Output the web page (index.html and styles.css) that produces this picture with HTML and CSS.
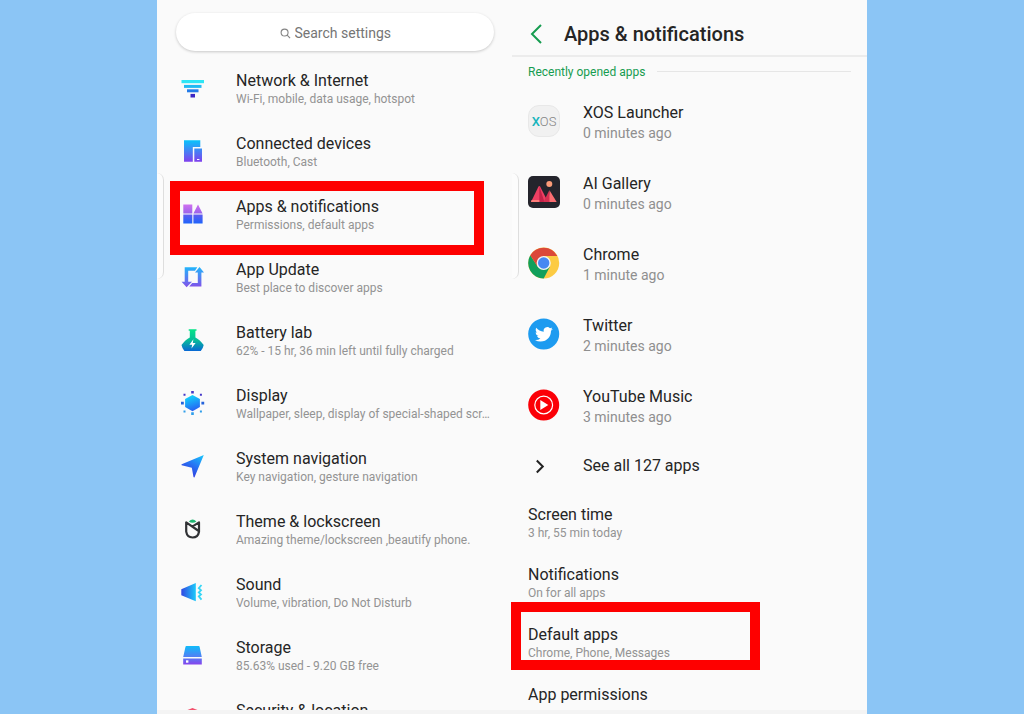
FILE: index.html
```html
<!DOCTYPE html>
<html lang="en">
<head>
<meta charset="utf-8">
<title>Settings</title>
<link rel="stylesheet" href="styles.css">
</head>
<body>
<main class="screens">
  <section class="screen" aria-label="Settings">
    <div class="edge-handle"></div>
    <div class="screen-content">
      <label class="search">
        <svg class="search-icon" viewBox="0 0 12 12" aria-hidden="true"><circle cx="5" cy="5" r="3.8"/><path d="M7.8 7.8 11 11"/></svg>
        <input class="search-input" type="text" placeholder="Search settings" aria-label="Search settings">
      </label>
      <nav class="settings-list">
        <a class="setting" href="#network">
          <svg class="setting-icon" viewBox="0 0 28 28" aria-hidden="true"><path fill="#2ee6f5" d="M2.5 5H25v3.200H2.500z"/><path fill="#20b9f3" d="M5 9.900h17.500v3H5z"/><path fill="#237be8" d="M8 14.300h11.500v3H8z"/><path fill="#3c27c4" d="M11.500 18.900H16v3.600h-4.500z"/></svg>
          <span class="setting-text"><span class="title">Network &amp; Internet</span><span class="summary">Wi-Fi, mobile, data usage, hotspot</span></span>
        </a>
        <a class="setting" href="#devices">
          <svg class="setting-icon" viewBox="0 0 28 28" aria-hidden="true"><defs><linearGradient id="g-dev" x2="0" y2="1"><stop stop-color="#08c4fb"/><stop offset="1" stop-color="#8040ee"/></linearGradient></defs><path fill="url(#g-dev)" d="M5 2.200h16.300v6.800h-7.500v14.700H5zM15.300 10.600h7.700v13.100h-7.700z"/><path fill="#fff" d="M18 21h2.400v1H18z"/></svg>
          <span class="setting-text"><span class="title">Connected devices</span><span class="summary">Bluetooth, Cast</span></span>
        </a>
        <a class="setting setting-marked" href="#apps">
          <svg class="setting-icon" viewBox="0 0 28 28" aria-hidden="true"><defs><linearGradient id="g-apps" x2="0" y2="1"><stop stop-color="#cf70f0"/><stop offset=".45" stop-color="#9c64ea"/><stop offset=".55" stop-color="#5b5cf0"/><stop offset="1" stop-color="#1c64fb"/></linearGradient></defs><path fill="url(#g-apps)" d="M4.300 3.600h9v8.800h-9zM19 3.600l4.600 8.800h-9.200zM4.300 13.600h9v9h-9zM14.400 13.600h9.200v9h-9.200z"/></svg>
          <span class="setting-text"><span class="title">Apps &amp; notifications</span><span class="summary">Permissions, default apps</span></span>
        </a>
        <a class="setting" href="#update">
          <svg class="setting-icon" viewBox="0 0 28 28" aria-hidden="true"><defs><linearGradient id="g-upd" x2="0" y2="1"><stop stop-color="#20b6fb"/><stop offset="1" stop-color="#8350ea"/></linearGradient></defs><path fill="url(#g-upd)" d="M5.700 3.300h12.600L16 6.700H9.200v11H13L7.600 23.200 2.600 17.700h3.100zM20.500 3 25 8.500h-2.600V22.600H10.200l3-3.500h5.600V8.500H16z"/></svg>
          <span class="setting-text"><span class="title">App Update</span><span class="summary">Best place to discover apps</span></span>
        </a>
        <a class="setting" href="#battery">
          <svg class="setting-icon" viewBox="0 0 28 28" aria-hidden="true"><defs><linearGradient id="g-bat" x2="0" y2="1"><stop stop-color="#06e587"/><stop offset=".5" stop-color="#06bd98"/><stop offset="1" stop-color="#0868d4"/></linearGradient></defs><path fill="url(#g-bat)" d="M9.700 2.200h7.800v1.600h-1.100v6.700q4 1.800 8.300 7.500-.7 3.600-2.900 5.900H5.400q-2.200-2.300-2.900-5.900 4.300-5.700 8.300-7.500V3.800H9.700z"/><path fill="#fff" d="m14.400 12.300-4 5.400h2.700l-.6 3.800 4.100-5.600h-2.800z"/></svg>
          <span class="setting-text"><span class="title">Battery lab</span><span class="summary">62% - 15 hr, 36 min left until fully charged</span></span>
        </a>
        <a class="setting" href="#display">
          <svg class="setting-icon" viewBox="0 0 28 28" aria-hidden="true"><defs><linearGradient id="g-dis" x1=".3" x2=".6" y2="1"><stop stop-color="#11d8fb"/><stop offset="1" stop-color="#275cf3"/></linearGradient></defs><path fill="url(#g-dis)" d="m13.500 5 7.400 4.100v8l-7.400 4.200-7.400-4.200v-8z"/><path fill="#4336c8" d="M12.200 1h2.600v2.600h-2.600zM4.500 3.700h2v2h-2zM20.900 3.700h2v2h-2z"/><path fill="#2463dc" d="M2 11.800h2.800v2.800H2zM22.400 11.800h2.800v2.800h-2.800z"/><path fill="#2f9eea" d="M12.200 22.300h2.600V25h-2.600zM4.500 20.600h2v2h-2zM20.900 20.600h2v2h-2z"/></svg>
          <span class="setting-text"><span class="title">Display</span><span class="summary">Wallpaper, sleep, display of special-shaped scr…</span></span>
        </a>
        <a class="setting" href="#navigation">
          <svg class="setting-icon" viewBox="0 0 28 28" aria-hidden="true"><defs><linearGradient id="g-nav" x1="1" x2=".4" y2="1"><stop stop-color="#16c9fc"/><stop offset=".5" stop-color="#2678f4"/><stop offset="1" stop-color="#3336de"/></linearGradient></defs><path fill="url(#g-nav)" d="M24.800 2 15.500 24.200q-.5.600-1-.2L12.800 14.700 2.700 12.200q-.6-.5 0-1z"/></svg>
          <span class="setting-text"><span class="title">System navigation</span><span class="summary">Key navigation, gesture navigation</span></span>
        </a>
        <a class="setting" href="#theme">
          <svg class="setting-icon" viewBox="0 0 28 28" aria-hidden="true"><path fill="#20b673" d="M9.800 5.500q3.800-4 7.600 0-1.800 1.300-3.800 1.300T9.800 5.500z"/><path fill="none" stroke="#303235" stroke-width="2.200" stroke-linejoin="round" d="M7.200 6.400v9.300q.9 5.800 6.400 5.800 5.400 0 6.400-5.800V6.400L13.300 10.600zM7.200 6.400l12.500 8.600"/></svg>
          <span class="setting-text"><span class="title">Theme &amp; lockscreen</span><span class="summary">Amazing theme/lockscreen ,beautify phone.</span></span>
        </a>
        <a class="setting" href="#sound">
          <svg class="setting-icon" viewBox="0 0 28 28" aria-hidden="true"><defs><linearGradient id="g-snd"><stop stop-color="#3147e2"/><stop offset="1" stop-color="#1ecafa"/></linearGradient></defs><path fill="url(#g-snd)" d="M2.300 10.200 16.800 4v18.200L2.300 16.300z"/><path fill="none" stroke="#36d6f5" stroke-width="1.800" d="m22.500 6-2.700 3.200 2.200 2-2.200 2.200 2.200 2-2.200 2 2.700 3.200"/></svg>
          <span class="setting-text"><span class="title">Sound</span><span class="summary">Volume, vibration, Do Not Disturb</span></span>
        </a>
        <a class="setting" href="#storage">
          <svg class="setting-icon" viewBox="0 0 28 28" aria-hidden="true"><defs><linearGradient id="g-sto" x2="0" y2="1"><stop stop-color="#10bcfa"/><stop offset=".65" stop-color="#5a77f3"/><stop offset="1" stop-color="#8742ec"/></linearGradient></defs><path fill="url(#g-sto)" d="M7.300 4h12.500q.6 0 .8.700L22.800 15H4.200L6.500 4.700q.2-.7.800-.7zM4.200 16.600h18.600v6H4.200z"/><path fill="#fff" d="M7 18.300h2.400v2.400H7z"/></svg>
          <span class="setting-text"><span class="title">Storage</span><span class="summary">85.63% used - 9.20 GB free</span></span>
        </a>
        <a class="setting" href="#security">
          <svg class="setting-icon" viewBox="0 0 28 28" aria-hidden="true"><path fill="#f2506c" d="M13.500 3q4 2 9 3v8q-2 7-9 10-7-3-9-10V6q5-1 9-3z"/></svg>
          <span class="setting-text"><span class="title">Security &amp; location</span></span>
        </a>
      </nav>
    </div>
  </section>

  <section class="screen" aria-label="Apps and notifications">
    <div class="edge-handle"></div>
    <div class="screen-content">
      <header class="app-bar">
        <button class="back" type="button" aria-label="Back"><svg class="back-icon" viewBox="0 0 14 20" aria-hidden="true"><path d="M12 1 3 10l9 9"/></svg></button>
        <h1 class="heading">Apps &amp; notifications</h1>
      </header>
      <h2 class="section-label">Recently opened apps</h2>
      <nav class="app-list">
        <a class="app" href="#xos">
          <span class="xos-icon" aria-hidden="true"><span class="xos-x">X</span>OS</span>
          <span class="app-text"><span class="title">XOS Launcher</span><span class="time">0 minutes ago</span></span>
        </a>
        <a class="app" href="#gallery">
          <svg class="app-icon" viewBox="0 0 32 32" aria-hidden="true"><rect width="32" height="32" rx="5" fill="#24242c"/><circle cx="21.300" cy="8" r="3" fill="#fb9b78"/><path fill="#ee3f63" d="M10.500 10.500q.8-1 1.600 0L20 26H3z"/><path fill="#c42249" d="m11.300 10.200 5.200 15.800h-5.200z"/><path fill="#fa6d71" d="m21.500 14.300 7.200 11.700h-8.200z"/><path fill="#d62f51" d="m21.300 14.300.2 11.700h-6z"/><path fill="#ff7b79" d="M3.500 24h7.800v2H3z"/></svg>
          <span class="app-text"><span class="title">AI Gallery</span><span class="time">0 minutes ago</span></span>
        </a>
        <a class="app" href="#chrome">
          <svg class="app-icon" viewBox="0 0 32 32" aria-hidden="true"><circle cx="15.700" cy="16" r="15.500" fill="#fccb43"/><path fill="#119f5b" d="M2.280 8.250A15.500 15.500 0 0 0 15.700 31.500L22 19.500 9.600 19.500z"/><path fill="#db4839" d="M2.280 8.250A15.500 15.500 0 0 1 29.300 8.900H15.700L9.500 19.500z"/><circle cx="15.700" cy="16" r="7.100" fill="#f4f4f4"/><circle cx="15.700" cy="16" r="5.700" fill="#4688f2"/></svg>
          <span class="app-text"><span class="title">Chrome</span><span class="time">1 minute ago</span></span>
        </a>
        <a class="app" href="#twitter">
          <svg class="app-icon" viewBox="0 0 32 32" aria-hidden="true"><circle cx="15.700" cy="16" r="15.500" fill="#1d9bf0"/><path fill="#fff" transform="translate(7 7.500) scale(.74)" d="M23.953 4.570a10 10 0 0 1-2.825.775 4.958 4.958 0 0 0 2.163-2.723c-.951.555-2.005.959-3.127 1.184a4.920 4.920 0 0 0-8.384 4.482C7.690 8.095 4.067 6.130 1.640 3.162a4.822 4.822 0 0 0-.666 2.475c0 1.710.870 3.213 2.188 4.096a4.904 4.904 0 0 1-2.228-.616v.060a4.923 4.923 0 0 0 3.946 4.827 4.996 4.996 0 0 1-2.212.085 4.936 4.936 0 0 0 4.604 3.417 9.867 9.867 0 0 1-6.102 2.105c-.390 0-.779-.023-1.170-.067a13.995 13.995 0 0 0 7.557 2.209c9.053 0 13.998-7.496 13.998-13.985 0-.210 0-.420-.015-.630A9.935 9.935 0 0 0 24 4.590z"/></svg>
          <span class="app-text"><span class="title">Twitter</span><span class="time">2 minutes ago</span></span>
        </a>
        <a class="app" href="#youtube-music">
          <svg class="app-icon" viewBox="0 0 32 32" aria-hidden="true"><circle cx="15.700" cy="16" r="15.500" fill="#fb0007"/><circle cx="15.700" cy="16" r="8.900" fill="none" stroke="#fff" stroke-width="1.200"/><path fill="#fff" d="m12.300 11 8 5-8 5z"/></svg>
          <span class="app-text"><span class="title">YouTube Music</span><span class="time">3 minutes ago</span></span>
        </a>
        <a class="app see-all" href="#all">
          <svg class="app-icon" viewBox="0 0 32 32" aria-hidden="true"><path fill="none" stroke="#222" stroke-width="2" d="m8.800 9.500 6 6-6 6"/></svg>
          <span class="title">See all 127 apps</span>
        </a>
      </nav>
      <nav class="options">
        <a class="option" href="#screen-time"><span class="title">Screen time</span><span class="summary">3 hr, 55 min today</span></a>
        <a class="option" href="#notifications"><span class="title">Notifications</span><span class="summary">On for all apps</span></a>
        <a class="option option-marked" href="#default-apps"><span class="title">Default apps</span><span class="summary">Chrome, Phone, Messages</span></a>
        <a class="option" href="#permissions"><span class="title">App permissions</span></a>
      </nav>
    </div>
  </section>
</main>
</body>
</html>
```
FILE: styles.css
```css
* {
  box-sizing: border-box;
}

body {
  margin: 0;
  background: #8bc5f5;
  color: #252525;
  font-family: Roboto, "Liberation Sans", sans-serif;
}

a {
  color: inherit;
  text-decoration: none;
}

.screens {
  display: grid;
  grid-template-columns: 1fr 1fr;
  max-width: 710px;
  height: 100vh;
  margin: 0 auto;
  background: #fafafa;
}

.screen {
  position: relative;
  display: flex;
  flex-direction: column;
  min-width: 0;
  min-height: 0;
  border-bottom: 4px solid #f4f4f4;
}

.screen-content {
  flex: 1;
  min-height: 0;
  overflow-x: visible;
  overflow-y: clip;
}

.edge-handle {
  position: absolute;
  top: 173px;
  left: 0;
  width: 7px;
  height: 106px;
  border-right: 1px solid #dedede;
  border-radius: 0 8px 8px 0;
  background: #fcfcfc;
}

.title {
  font-size: 16px;
  line-height: 20px;
}

.summary {
  overflow: hidden;
  color: #939393;
  font-size: 12px;
  line-height: 16px;
  text-overflow: ellipsis;
  white-space: nowrap;
}

/* Settings screen */

.search {
  display: flex;
  align-items: center;
  justify-content: center;
  gap: 4px;
  height: 38px;
  margin: 13px 18px 7px 19px;
  padding-top: 2px;
  border-radius: 19px;
  background: #fff;
  box-shadow: 0 1px 3px rgba(0, 0, 0, 0.2);
}

.search-icon {
  width: 11px;
  height: 11px;
  fill: none;
  stroke: #858585;
  stroke-width: 1.2;
}

.search-input {
  width: 96px;
  height: 24px;
  padding: 0;
  border: 0;
  outline: 0;
  background: none;
  color: #252525;
  font-family: inherit;
  font-size: 14px;
}

.search-input::placeholder {
  color: #757575;
  opacity: 1;
}

.setting {
  position: relative;
  display: flex;
  align-items: flex-start;
  gap: 29px;
  height: 63px;
  padding: 13px 16px 0 22px;
}

.setting-icon {
  flex: none;
  width: 28px;
  height: 28px;
  margin-top: 4px;
}

.setting-text,
.app-text {
  display: flex;
  flex-direction: column;
  min-width: 0;
}

.setting-marked::after,
.option-marked::after {
  content: "";
  position: absolute;
  border: 10px solid #fe0000;
}

.setting-marked::after {
  inset: -3px 28px -8px 13px;
}

/* Apps and notifications screen */

.app-bar {
  display: flex;
  align-items: center;
  gap: 20px;
  height: 57px;
  padding: 12px 16px 0;
  border-bottom: 2px solid #ececec;
}

.back {
  display: flex;
  justify-content: center;
  width: 16px;
  padding: 0;
  border: 0;
  background: none;
}

.back-icon {
  width: 14px;
  height: 20px;
  fill: none;
  stroke: #169c50;
  stroke-width: 2;
}

.heading {
  margin: 0;
  font-size: 20px;
  font-weight: 500;
  line-height: 24px;
}

.section-label {
  display: flex;
  align-items: center;
  gap: 12px;
  height: 29px;
  margin: 0;
  padding: 0 16px;
  color: #169c50;
  font-size: 12px;
  font-weight: 400;
}

.section-label::after {
  content: "";
  flex: 1;
  height: 1px;
  background: #e6e6e6;
}

.app {
  display: flex;
  align-items: flex-start;
  gap: 23px;
  height: 71px;
  padding: 17px 16px 0;
}

.app-icon,
.xos-icon {
  flex: none;
  width: 32px;
  height: 32px;
  margin-top: 2px;
}

.xos-icon {
  display: flex;
  align-items: center;
  justify-content: center;
  border: 1px solid #e8e8e8;
  border-radius: 11px;
  background: #f1f1f1;
  color: #858585;
  font-size: 13px;
  font-weight: 300;
}

.xos-x {
  color: #19b5bd;
  font-weight: 500;
}

.time {
  color: #8f8f8f;
  font-size: 14px;
  line-height: 20px;
}

.see-all {
  align-items: center;
  height: 50px;
  padding-top: 0;
}

.options {
  padding-top: 3px;
}

.option {
  position: relative;
  display: flex;
  flex-direction: column;
  height: 60px;
  padding: 11px 16px 0;
}

.option-marked::after {
  inset: -12px 107px 4px -1px;
}
```
